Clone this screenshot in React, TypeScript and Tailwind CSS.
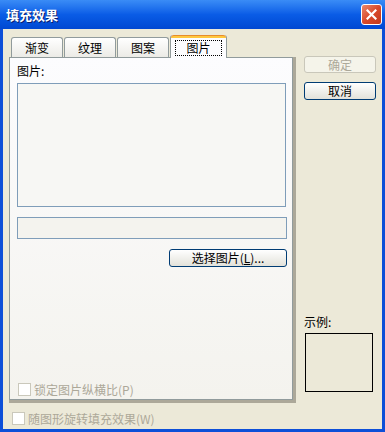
import React from "react";

const font = { fontFamily: '"Noto Sans CJK SC", "Liberation Sans", sans-serif' };

function Tab({ label, selected }: { label: string; selected?: boolean }) {
  if (selected) {
    return (
      <div className="relative z-10 -mb-px flex h-[23px] w-[57px] flex-col rounded-t-[3px] border-x border-[#919B9C] bg-[#FCFCFE]">
        <div className="h-[3px] rounded-t-[3px] bg-[#FFC73C] border-t border-[#E68B2C]" />
        <div className="flex flex-1 items-center justify-center">
          <span className="border border-dotted border-black px-[10px] leading-[14px] text-[12px] text-black">{label}</span>
        </div>
      </div>
    );
  }
  return (
    <div className="mr-[1px] flex h-[20px] w-[52px] items-center justify-center rounded-t-[3px] border border-b-0 border-[#919B9C] bg-gradient-to-b from-white to-[#ECEBE6] text-[12px] leading-none text-black">
      {label}
    </div>
  );
}

function Checkbox({ label }: { label: string }) {
  return (
    <div className="flex items-center gap-[3px] text-[12px] text-[#ACA899]">
      <div className="h-[13px] w-[13px] border border-[#CAC8BB] bg-white" />
      <span className="leading-none">{label}</span>
    </div>
  );
}

export default function App() {
  return (
    <div style={font} className="flex h-[432px] w-[385px] flex-col bg-[#0D4FD8]">
      {/* title bar */}
      <div className="flex h-[29px] items-center justify-between bg-gradient-to-b from-[#3A8CF6] via-[#0A5CE6] to-[#0148D2] pl-[6px] pr-[3px]">
        <span className="text-[13px] font-bold text-white [text-shadow:1px_1px_0_#0A1E6E]">填充效果</span>
        <div className="flex h-[21px] w-[21px] items-center justify-center rounded-[3px] border border-white bg-gradient-to-br from-[#E9876A] via-[#D9492A] to-[#C2381C]">
          <svg width="11" height="11" viewBox="0 0 11 11">
            <path d="M1.5 1.5 L9.5 9.5 M9.5 1.5 L1.5 9.5" stroke="white" strokeWidth="2.2" strokeLinecap="square" />
          </svg>
        </div>
      </div>
      {/* body */}
      <div className="mx-[3px] mb-[3px] flex flex-1 bg-[#ECE9D8]">
        {/* left column */}
        <div className="flex w-[293px] flex-col pl-[6px] pt-[6px]">
          <div className="flex items-end pl-[2px]">
            <Tab label="渐变" />
            <Tab label="纹理" />
            <Tab label="图案" />
            <Tab label="图片" selected />
          </div>
          <div className="flex h-[346px] w-[287px] flex-col border-b-[3px] border-r-[3px] border-b-[#ACA899] border-r-[#ACA899]">
            <div className="flex flex-1 flex-col border border-[#919B9C] bg-gradient-to-b from-[#FCFCFE] to-[#F4F3EE] pl-[7px]">
              <div className="mt-[6px] h-[14px] text-[12px] leading-[14px] text-black">图片:</div>
              <div className="mt-[5px] h-[124px] w-[269px] border border-[#7F9DB9] bg-[#F7F7F4]" />
              <div className="mt-[10px] h-[22px] w-[270px] border border-[#7F9DB9] bg-[#F4F3EE]" />
              <div className="mt-[10px] flex w-[270px] justify-end">
                <div className="flex h-[18px] w-[118px] items-center justify-center rounded-[3px] border border-[#003C74] bg-gradient-to-b from-white to-[#E3E2DA] text-[12px] leading-none text-black">
                  选择图片(<span className="underline">L</span>)...
                </div>
              </div>
              <div className="mt-[116px] pl-[1px]">
                <Checkbox label="锁定图片纵横比(P)" />
              </div>
            </div>
          </div>
          <div className="mt-[9px] pl-[3px]">
            <Checkbox label="随图形旋转填充效果(W)" />
          </div>
        </div>
        {/* right column */}
        <div className="ml-[8px] flex w-[72px] flex-col pt-[27px]">
          <div className="flex h-[17px] w-[72px] items-center justify-center rounded-[3px] border border-[#C9C7BA] bg-[#F5F4EA] text-[12px] leading-none text-[#ACA899]">
            确定
          </div>
          <div className="mt-[9px] flex h-[18px] w-[72px] items-center justify-center rounded-[3px] border border-[#003C74] bg-gradient-to-b from-white to-[#E3E2DA] text-[12px] leading-none text-black">
            取消
          </div>
          <div className="mt-[215px] h-[14px] text-[12px] leading-[14px] text-black">示例:</div>
          <div className="ml-[1px] mt-[4px] h-[59px] w-[68px] border border-black bg-[#ECE9D8]" />
        </div>
      </div>
    </div>
  );
}
